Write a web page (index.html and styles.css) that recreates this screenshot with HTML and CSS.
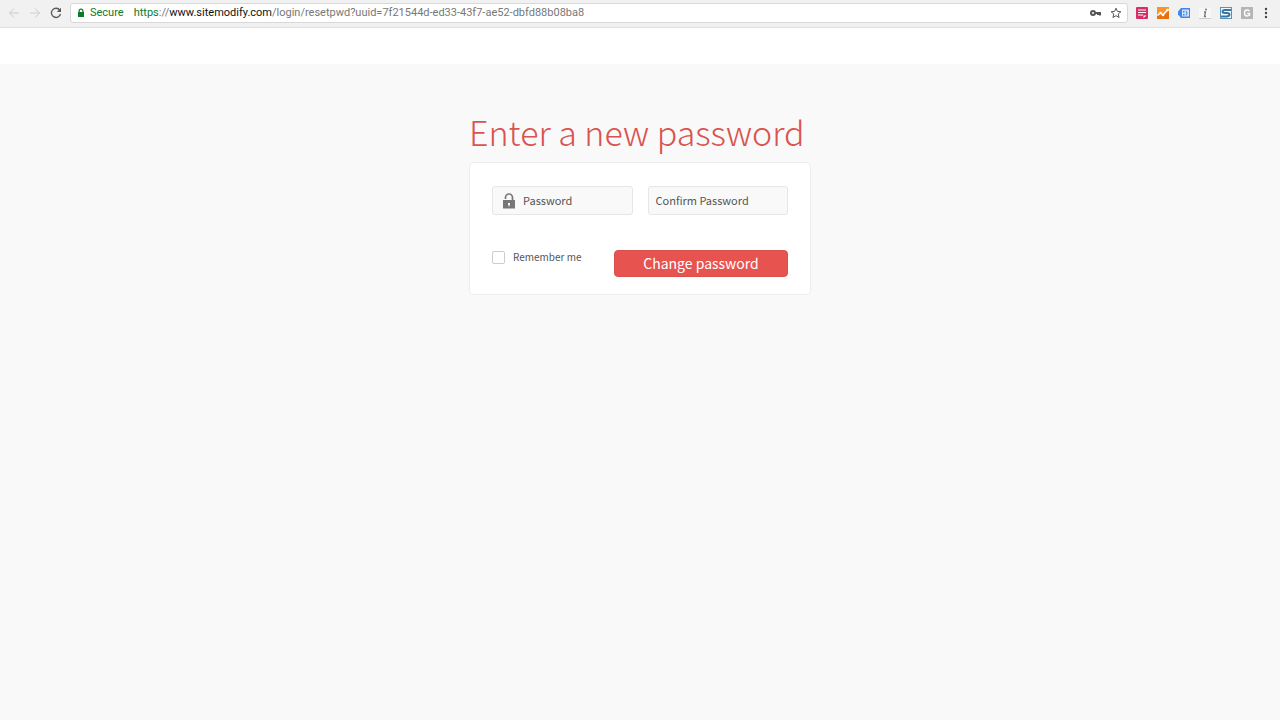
FILE: index.html
```
<!DOCTYPE html>
<html lang="en">
<head>
  <meta charset="UTF-8">
  <meta name="viewport" content="width=device-width, initial-scale=1.0">
  <title>Enter a new password</title>
  <link rel="stylesheet" href="styles.css">
</head>
<body>
  <!-- Browser toolbar -->
  <div class="toolbar">
    <div class="nav-buttons">
      <button type="button" aria-label="Back" disabled>
        <svg width="12" height="12" viewBox="0 0 12 12"><path d="M11 6H1.500M6 1.500 1.500 6 6 10.500"/></svg>
      </button>
      <button type="button" aria-label="Forward" disabled>
        <svg width="12" height="12" viewBox="0 0 12 12"><path d="M1 6h9.500M6 1.500 10.500 6 6 10.500"/></svg>
      </button>
      <button type="button" aria-label="Reload">
        <svg width="12" height="12" viewBox="0 0 12 12"><path d="M9.800 3.200A4.600 4.600 0 1 0 10.500 7"/><path class="solid" d="M11 .8V5H6.800z"/></svg>
      </button>
    </div>
    <div class="address-bar">
      <svg class="secure-icon" width="8" height="10" viewBox="0 0 8 10"><path d="M1.500 4V3a2.500 2.500 0 0 1 5 0v1H7v5H1V4zm1.200 0h2.600V3a1.300 1.300 0 0 0-2.600 0z"/></svg>
      <span class="secure">Secure</span>
      <span class="url"><span class="scheme">https</span>://<span class="host">www.sitemodify.com</span>/login/resetpwd?uuid=7f21544d-ed33-43f7-ae52-dbfd88b08ba8</span>
      <svg class="key" width="12" height="8" viewBox="0 0 12 8"><circle cx="3" cy="4" r="2"/><path d="M5 4h6M10 4v2.500M8 4v2"/></svg>
      <svg class="star" width="12" height="12" viewBox="0 0 12 12"><path d="m6 1.200 1.400 3.200 3.500.3-2.700 2.300.9 3.500L6 8.700l-3.100 1.800.9-3.500L1.100 4.700l3.500-.3z"/></svg>
    </div>
    <div class="extensions">
      <svg width="14" height="14" viewBox="0 0 14 14"><path fill="#d92b66" d="M2 1h10a1 1 0 0 1 1 1v10a1 1 0 0 1-1 1H2a1 1 0 0 1-1-1V2a1 1 0 0 1 1-1z"/><path stroke="#fff" d="M3 4h8M3 6.500h8M3 9h5"/><path fill="#fff" d="M8.500 12V9.500h3z"/></svg>
      <svg width="14" height="14" viewBox="0 0 14 14"><rect x="1" y="1" width="12" height="12" fill="#fb9328"/><path fill="#e8700f" d="M1 10l3-3 3 2 5-5 1 1v8H1z"/><path fill="none" stroke="#fff" stroke-width="1.500" d="M1.500 9.500 4.500 7l2.500 2L12 3.500"/><g fill="#fff"><circle cx="4.500" cy="7" r="1.300"/><circle cx="7" cy="9" r="1.300"/><circle cx="11.500" cy="4" r="1.300"/></g></svg>
      <svg width="14" height="14" viewBox="0 0 14 14"><path fill="#4286e8" d="M4 2h9v10H4L1 8.500v-3z"/><path fill="#cfe1fb" d="M5 3.500h7v7H5z"/><path fill="#4286e8" d="M6 5h1.500v1.500H6zM6 8h1.500v1.500H6z"/><path fill="none" stroke="#4286e8" d="M9 5q2 2 0 4.500"/></svg>
      <svg width="14" height="14" viewBox="0 0 14 14"><rect x="1" y="2" width="12" height="10" fill="#f7f7f7"/><path stroke="#ccc" d="M1 12.500h12"/><circle cx="8" cy="3.500" r="1" fill="#777"/><path fill="none" stroke="#777" stroke-width="1.300" d="M6 6h1.500L6.500 10.500H8"/></svg>
      <svg width="14" height="14" viewBox="0 0 14 14"><rect x="1.500" y="1.500" width="11" height="11" fill="#f4f9fc" stroke="#5b93b8"/><path fill="none" stroke="#37749f" stroke-width="2" d="M12 4H6Q3.500 4 3.500 5.500T6 7h2q2.500 0 2.500 1.500T8 10.500H2"/></svg>
      <svg width="14" height="14" viewBox="0 0 14 14"><rect x="1" y="1" width="12" height="12" fill="#b5b5b5"/><path fill="none" stroke="#fff" stroke-width="1.400" d="M9.500 5Q8.500 4 7 4 4.500 4 4.500 7t2.500 3q1.500 0 2.500-.7V7.500H7.300"/></svg>
    </div>
    <button type="button" class="menu" aria-label="Menu">
      <svg width="4" height="12" viewBox="0 0 4 12"><circle cx="2" cy="2" r="1.200"/><circle cx="2" cy="6" r="1.200"/><circle cx="2" cy="10" r="1.200"/></svg>
    </button>
  </div>

  <header class="site-header"></header>

  <main class="container">
    <h1>Enter a new password</h1>
    <form class="card">
      <div class="fields">
        <div class="field">
          <svg width="12" height="16" viewBox="0 0 12 16"><path fill="none" stroke="#777" stroke-width="1.700" d="M2.500 6V4.500a3.500 3.500 0 0 1 7 0V8"/><path fill="#777" d="M0 7h12v8.500H0z"/><path fill="#fff" d="M5 10h2v1.500l-.5.500v1.500h-1V12l-.5-.5z"/></svg>
          <input type="password" placeholder="Password" aria-label="Password">
        </div>
        <div class="field">
          <input type="password" placeholder="Confirm Password" aria-label="Confirm Password">
        </div>
      </div>
      <div class="actions">
        <label class="remember"><input type="checkbox"> Remember me</label>
        <button type="submit" class="submit-btn">Change password</button>
      </div>
    </form>
  </main>
</body>
</html>
```
FILE: styles.css
```
* {
  box-sizing: border-box;
}
body {
  font-family: 'Noto Sans CJK SC', 'Noto Sans', sans-serif;
  background: #f9f9f9;
  margin: 0;
  color: #555;
}
svg {
  display: block;
  flex: none;
}
button {
  padding: 0;
  border: none;
  background: none;
  font-family: inherit;
}

/* Browser toolbar */
.toolbar {
  display: flex;
  align-items: center;
  height: 28px;
  padding: 0 12px 1px 8px;
  background: #f1f1f1;
  border-bottom: 1px solid #dedede;
}
.nav-buttons {
  display: flex;
  gap: 9px;
  margin-right: 8px;
}
.nav-buttons svg {
  fill: none;
  stroke: #5a5a5a;
  stroke-width: 1.3;
}
.nav-buttons button:disabled svg {
  stroke: #ccc;
  stroke-width: 1;
}
.nav-buttons .solid {
  fill: #5a5a5a;
  stroke: none;
}
.address-bar {
  flex: 1;
  display: flex;
  align-items: center;
  height: 20px;
  padding: 0 5px 0 6px;
  background: #fff;
  border: 1px solid #d8d8d8;
  border-radius: 3px;
  font-family: Roboto, sans-serif;
  font-size: 11px;
  line-height: 20px;
  white-space: nowrap;
}
.secure-icon {
  fill: #0b7a2b;
}
.secure {
  margin-left: 5px;
  padding-right: 4px;
  color: #0b7a2b;
}
.url {
  flex: 1;
  margin-left: 6px;
  color: #777;
}
.scheme {
  color: #0b7a2b;
}
.host {
  color: #111;
}
.key,
.star {
  fill: none;
  stroke: #555;
}
.key {
  stroke-width: 2;
  margin-right: 8px;
}
.extensions {
  display: flex;
  align-items: center;
  gap: 7px;
  margin-left: 7px;
}
.menu {
  margin-left: 10px;
}
.menu svg {
  fill: #444;
}

/* Page */
.site-header {
  height: 36px;
  background: #fff;
}
.container {
  max-width: 342px;
  margin: 0 auto;
  padding-top: 40px;
}
h1 {
  margin: 0 0 2px;
  font-size: 34px;
  font-weight: 300;
  line-height: 56px;
  color: #d9534f;
  white-space: nowrap;
}
.card {
  padding: 23px 22px 17px;
  background: #fff;
  border: 1px solid #ececec;
  border-radius: 4px;
}
.fields {
  display: grid;
  grid-template-columns: repeat(2, minmax(0, 1fr));
  gap: 15px;
}
.field {
  display: flex;
  align-items: center;
  height: 29px;
  padding-left: 7px;
  background: #f9f9f9;
  border: 1px solid #e6e6e6;
  border-radius: 3px;
}
.field svg {
  margin: 0 8px 0 3px;
}
.field input {
  flex: 1;
  min-width: 0;
  padding: 0 0 2px;
  border: none;
  outline: none;
  background: none;
  font-family: inherit;
  font-size: 11px;
  color: #555;
}
.field input::placeholder {
  color: #555;
  opacity: 1;
}
.actions {
  display: flex;
  align-items: flex-start;
  justify-content: space-between;
  margin-top: 35px;
}
.remember {
  display: flex;
  align-items: center;
  gap: 8px;
  font-size: 10px;
  line-height: 14px;
}
.remember input {
  appearance: none;
  width: 13px;
  height: 13px;
  margin: 0;
  background: #fff;
  border: 1px solid #ccc;
  border-radius: 2px;
}
.remember input:checked {
  background: #e7534f;
}
.submit-btn {
  width: 174px;
  height: 27px;
  padding-bottom: 2px;
  background: #e7534f;
  border: 1px solid #d9504c;
  border-radius: 4px;
  font-size: 14px;
  line-height: 22px;
  color: #fff;
  cursor: pointer;
}
```
